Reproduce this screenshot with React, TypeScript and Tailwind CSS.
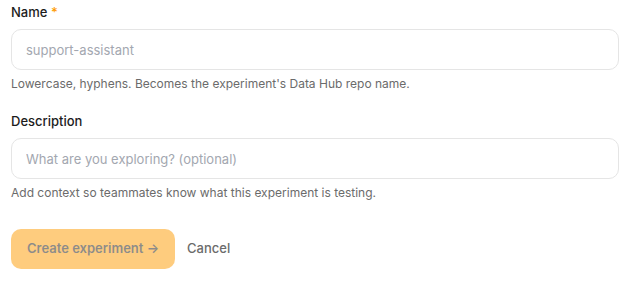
import React from 'react';

const App: React.FC = () => {
  return (
    <div className="min-h-screen bg-white px-[11px] pt-[2px] font-['Inter',sans-serif]">
      <div className="flex flex-col">
        <label className="text-[13px] leading-5 font-medium text-[#1c1c1c]">
          Name <span className="text-amber-500">*</span>
        </label>
        <input
          className="mt-[7px] h-[41px] w-full rounded-[10px] border border-[#e5e5e5] px-[14px] text-[13px] outline-none placeholder:text-[#a3a7b0]"
          placeholder="support-assistant"
        />
        <p className="mt-[6px] text-[12px] leading-4 text-[#6b6b6b]">
          Lowercase, hyphens. Becomes the experiment's Data Hub repo name.
        </p>

        <label className="mt-[19px] text-[13px] leading-5 font-medium text-[#1c1c1c]">Description</label>
        <input
          className="mt-[7px] h-[41px] w-full rounded-[10px] border border-[#e5e5e5] px-[14px] text-[13px] outline-none placeholder:text-[#a3a7b0]"
          placeholder="What are you exploring? (optional)"
        />
        <p className="mt-[6px] text-[12px] leading-4 text-[#6b6b6b]">
          Add context so teammates know what this experiment is testing.
        </p>

        <div className="mt-[28px] flex items-center gap-3">
          <button
            disabled
            className="h-10 rounded-[10px] bg-amber-500 px-4 text-[13px] font-semibold text-stone-900 opacity-50"
          >
            Create experiment →
          </button>
          <button className="text-[13px] font-medium text-[#6b6b6b]">Cancel</button>
        </div>
      </div>
    </div>
  );
};

export default App;
